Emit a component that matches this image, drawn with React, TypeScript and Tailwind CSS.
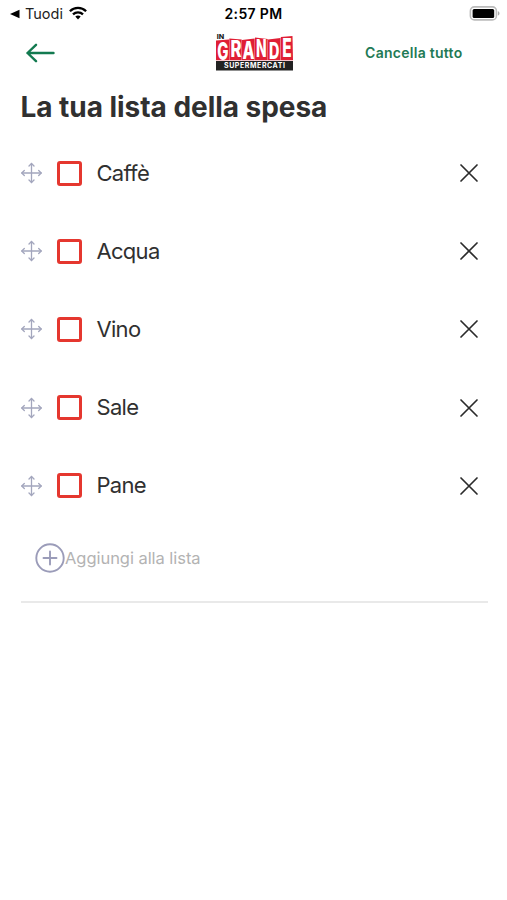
import React from 'react'

const items = [
    { id: 1, name: "Caffè" },
    { id: 2, name: "Acqua" },
    { id: 3, name: "Vino" },
    { id: 4, name: "Sale" },
    { id: 5, name: "Pane" },
]

// red tiles of the logo, one for each letter
const tiles = [
    { letter: "G", points: "0,5.5 13,4.5 13,25.3 0,25.3", x: 1.2, y: 24.6, size: 24, w: 11.2 },
    { letter: "R", points: "13.3,3.5 25.7,4.5 25.7,25.3 13.3,25.3", x: 14.4, y: 22.2, size: 23, w: 11 },
    { letter: "A", points: "26,5 38.7,3.5 38.7,25.3 26,25.3", x: 26.4, y: 24.2, size: 24, w: 12 },
    { letter: "N", points: "39,2.5 51.7,4 51.7,25.3 39,25.3", x: 40.1, y: 22, size: 24, w: 10.6 },
    { letter: "D", points: "52,4.5 64.5,3 64.5,25.3 52,25.3", x: 53.1, y: 24.2, size: 23, w: 10.4 },
    { letter: "E", points: "64.8,2 76.5,1 77,25.3 64.8,25.3", x: 66.2, y: 22.2, size: 26, w: 9.4 },
]

function StatusBar() {
    return (
        <div className="grid grid-cols-3 items-center h-[27px] pl-[9px] pr-[7px] text-black">
            <div className="flex items-center">
                <svg width="11" height="10" viewBox="0 0 11 10">
                    <path d="M1 5L10.5 0.8V9.2Z" fill="currentColor" />
                </svg>
                <span className="ml-[5px] text-[14.5px] text-[#222]">Tuodi</span>
                <svg className="ml-[6px] -mt-[2px]" width="18" height="14" viewBox="0 0 18 14" fill="none" stroke="currentColor" strokeWidth="2.3">
                    <path d="M0.9 5.2C5.4 0.7 12.6 0.7 17.1 5.2" />
                    <path d="M4 8.4C6.8 5.7 11.2 5.7 14 8.4" />
                    <path d="M6.3 10.6C7.8 9.2 10.2 9.2 11.7 10.6L9 13.4Z" fill="currentColor" stroke="none" />
                </svg>
            </div>
            <span className="pr-[2px] text-center text-[14px] font-semibold tracking-[0.35px]">2:57 PM</span>
            <svg className="justify-self-end" width="31" height="15" viewBox="0 0 31 15">
                <rect x="1.4" y="0.9" width="26" height="13" rx="4" fill="#fff" stroke="#bbb" strokeWidth="1.6" />
                <rect x="3.6" y="2.9" width="21.6" height="9" rx="1.5" fill="#000" />
                <path d="M28.9 5.2C31 5.8 31 9 28.9 9.6Z" fill="#aaa" />
            </svg>
        </div>
    )
}

function Logo() {
    return (
        <svg className="overflow-visible" width="78" height="37" viewBox="0 0 78 37" fontFamily="Inter, sans-serif">
            <text x="0.8" y="3.6" fontSize="5.6" fontWeight="800" fill="#222" textLength="7.5" lengthAdjust="spacingAndGlyphs">IN</text>
            {tiles.map((tile) => (
                <g key={tile.letter}>
                    <polygon points={tile.points} fill="#e01f35" />
                    <text x={tile.x} y={tile.y} fontSize={tile.size} fontWeight="800" fill="#fff" textLength={tile.w} lengthAdjust="spacingAndGlyphs">{tile.letter}</text>
                </g>
            ))}
            <rect x="0" y="26" width="77" height="9.5" fill="#222" />
            <text x="8" y="33.3" fontSize="7" fontWeight="700" fill="#fff" textLength="61">SUPERMERCATI</text>
        </svg>
    )
}

function MoveIcon() {
    return (
        <svg width="22" height="22" viewBox="0 0 22 22" fill="none" stroke="#a3a6bd" strokeWidth="1.3" strokeLinecap="round" strokeLinejoin="round">
            <path d="M11.5 1.5V20.5M1.8 11H21.2" />
            <path d="M9 4L11.5 1.5L14 4M9 18L11.5 20.5L14 18M4.3 8.5L1.8 11L4.3 13.5M18.7 8.5L21.2 11L18.7 13.5" />
        </svg>
    )
}

function App() {
    return (
        <div className="h-[900px] w-full bg-white overflow-hidden font-['Inter',sans-serif] text-[#303030]">
            <StatusBar />
            <header className="grid grid-cols-3 items-center h-[50px] px-[26px]">
                <svg className="mt-px" width="29" height="20" viewBox="0 0 29 20" fill="none" stroke="#137a50" strokeWidth="2.4" strokeLinecap="round" strokeLinejoin="round">
                    <path d="M27.5 10H1.5M10 1.8L1.5 10L10 18.2" />
                </svg>
                <div className="justify-self-center pl-[3px] pt-[2px]">
                    <Logo />
                </div>
                <button className="justify-self-end mr-[18.5px] whitespace-nowrap text-[14px] font-semibold tracking-[0.27px] text-[#1f7a55]">Cancella tutto</button>
            </header>
            <h1 className="h-[57px] pl-[20.5px] pt-[12px] text-[28px] leading-9 font-bold tracking-[-0.04px] whitespace-nowrap">La tua lista della spesa</h1>
            <ul>
                {items.map((item) => (
                    <li key={item.id} className="flex items-center h-[78.2px] pl-5 pr-[28px]">
                        <MoveIcon />
                        <span className="ml-[15px] size-[25px] rounded-[3px] border-3 border-[#e5372f]" />
                        <span className="ml-[14.5px] text-[22px] tracking-[-0.7px]">{item.name}</span>
                        <svg className="ml-auto" width="20" height="20" viewBox="0 0 20 20" stroke="#2b2b2b" strokeWidth="1.7" strokeLinecap="round">
                            <path d="M2 2L18 18M18 2L2 18" />
                        </svg>
                    </li>
                ))}
            </ul>
            <div className="flex items-center ml-[21px] mr-[19px] h-[78px] pl-[14px] pb-[9px] border-b-2 border-[#e9e9e9]">
                <svg width="30" height="30" viewBox="0 0 30 30" fill="none" stroke="#9b9cb9" strokeWidth="1.9" strokeLinecap="round">
                    <circle cx="15" cy="15" r="13.7" />
                    <path d="M15 8.5V21.5M8.5 15H21.5" />
                </svg>
                <span className="text-[16.5px] tracking-[-0.05px] text-[#b3b3b3]">Aggiungi alla lista</span>
            </div>
        </div>
    )
}

export default App
